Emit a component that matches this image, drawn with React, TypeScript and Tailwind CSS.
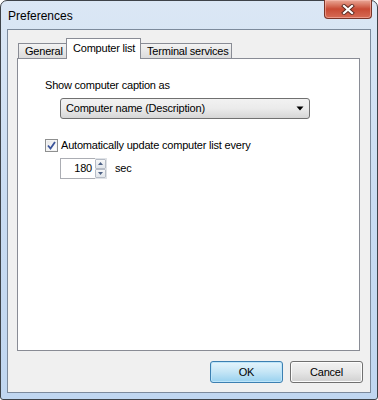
import React from "react";

function CloseGlyph() {
  return (
    <svg width="14" height="11" viewBox="0 0 14 11">
      <path d="M3 2 L11 9 M11 2 L3 9" stroke="#5a2a22" strokeWidth="4" strokeLinecap="square" />
      <path d="M3 2 L11 9 M11 2 L3 9" stroke="#ffffff" strokeWidth="2.2" strokeLinecap="square" />
    </svg>
  );
}

function Check() {
  return (
    <svg width="9" height="9" viewBox="0 0 9 9">
      <path d="M1 4.5 L3.5 7.5 L8 1" fill="none" stroke="#3b549a" strokeWidth="1.8" />
    </svg>
  );
}

export default function App() {
  return (
    <div className="w-[378px] h-[400px] bg-white font-['Liberation_Sans',Arial,sans-serif] text-[11px] tracking-[-0.2px] text-black leading-[13px] whitespace-nowrap">
      <div className="w-[378px] h-[400px] border border-[#3e4349] rounded-t-[7px] rounded-b-[3px] bg-gradient-to-b from-[#dbe7f5] via-[#c9dcf2] to-[#c0d6f0] flex flex-col px-[6px] pb-[6px]">
        {/* title bar */}
        <div className="h-[28px] flex items-start justify-between">
          <div className="pl-[1px] pt-[8px] text-[12px] leading-[14px] tracking-normal text-black">Preferences</div>
          <div className="-mt-[1px] -mr-[1px] w-[48px] h-[19px] rounded-b-[4px] border border-[#7a3428] border-t-0 bg-gradient-to-b from-[#e9a898] via-[#c84a34] to-[#d66b55] flex items-center justify-center shadow-[inset_0_0_0_1px_rgba(255,200,190,0.5)]">
            <CloseGlyph />
          </div>
        </div>
        {/* client */}
        <div className="flex-1 border border-[#7c8a9c] bg-[#f0f0f0] flex flex-col pt-[8px] pl-[9px] pr-[10px] pb-[9px]">
          {/* tab control */}
          <div className="flex flex-col">
            <div className="h-[20px] flex items-end pl-[1px]">
              <div className="w-[48px] h-[15px] border-l border-t border-[#898c95] bg-gradient-to-b from-[#f3f3f3] to-[#dcdcdc] flex items-center pl-[6px] pt-[1px]">
                General
              </div>
              <div className="relative z-10 -mb-[1px] w-[75px] h-[21px] border-l border-t border-r border-[#898c95] bg-white flex items-start pl-[6px] pt-[3px]">
                Computer list
              </div>
              <div className="w-[91px] h-[15px] border-t border-r border-[#898c95] bg-gradient-to-b from-[#f3f3f3] to-[#dcdcdc] flex items-center pl-[6px] pt-[1px]">
                Terminal services
              </div>
            </div>
            <div className="h-[293px] border border-[#898c95] bg-white flex flex-col pl-[27px] pt-[20px]">
              <div>Show computer caption as</div>
              <div className="ml-[15px] mt-[6px] w-[250px] h-[21px] rounded-[3px] border border-[#707070] bg-gradient-to-b from-[#f2f2f2] via-[#ebebeb] to-[#d6d6d6] flex items-center justify-between pl-[5px] pr-[5px]">
                <span>Computer name (Description)</span>
                <svg width="8" height="5" viewBox="0 0 8 5">
                  <path d="M0.5 0.5 L7.5 0.5 L4 4.5 Z" fill="#000" />
                </svg>
              </div>
              <div className="mt-[20px] flex items-center">
                <div className="w-[13px] h-[13px] border border-[#8e8f8f] bg-gradient-to-br from-[#dcdcdc] to-[#fbfbfb] flex items-center justify-center">
                  <div className="w-[11px] h-[11px] border border-[#f4f4f4] bg-gradient-to-br from-[#e8e8e8] to-[#ffffff] flex items-center justify-center">
                    <Check />
                  </div>
                </div>
                <span className="ml-[3px]">Automatically update computer list every</span>
              </div>
              <div className="ml-[15px] mt-[6px] flex items-center">
                <div className="w-[35px] h-[21px] border border-[#abadb3] border-r-0 bg-white flex items-center justify-end pr-[3px]">
                  180
                </div>
                <div className="w-[12px] h-[21px] flex flex-col border border-l-0 border-[#dfe2e6]">
                  <div className="flex-1 border border-[#b6bcc6] rounded-[1px] bg-gradient-to-b from-[#f6f7f8] to-[#e1e5ea] flex items-center justify-center">
                    <svg width="5" height="3" viewBox="0 0 5 3"><path d="M0 3 L2.5 0 L5 3 Z" fill="#4d6185" /></svg>
                  </div>
                  <div className="flex-1 border border-[#b6bcc6] rounded-[1px] bg-gradient-to-b from-[#f6f7f8] to-[#e1e5ea] flex items-center justify-center">
                    <svg width="5" height="3" viewBox="0 0 5 3"><path d="M0 0 L5 0 L2.5 3 Z" fill="#4d6185" /></svg>
                  </div>
                </div>
                <span className="ml-[8px]">sec</span>
              </div>
            </div>
          </div>
          {/* buttons */}
          <div className="mt-[10px] flex justify-end gap-[7px] -mr-[3px]">
            <div className="w-[73px] h-[22px] rounded-[3px] border border-[#3c7fb1] bg-gradient-to-b from-[#e5f4fc] via-[#c4e5f6] to-[#98d1ef] shadow-[inset_0_0_0_1px_#bde5fa] flex items-center justify-center">
              OK
            </div>
            <div className="w-[73px] h-[22px] rounded-[3px] border border-[#707070] bg-gradient-to-b from-[#f2f2f2] via-[#e6e6e6] to-[#d0d0d0] shadow-[inset_0_0_0_1px_#fcfcfc] flex items-center justify-center">
              Cancel
            </div>
          </div>
        </div>
      </div>
    </div>
  );
}
